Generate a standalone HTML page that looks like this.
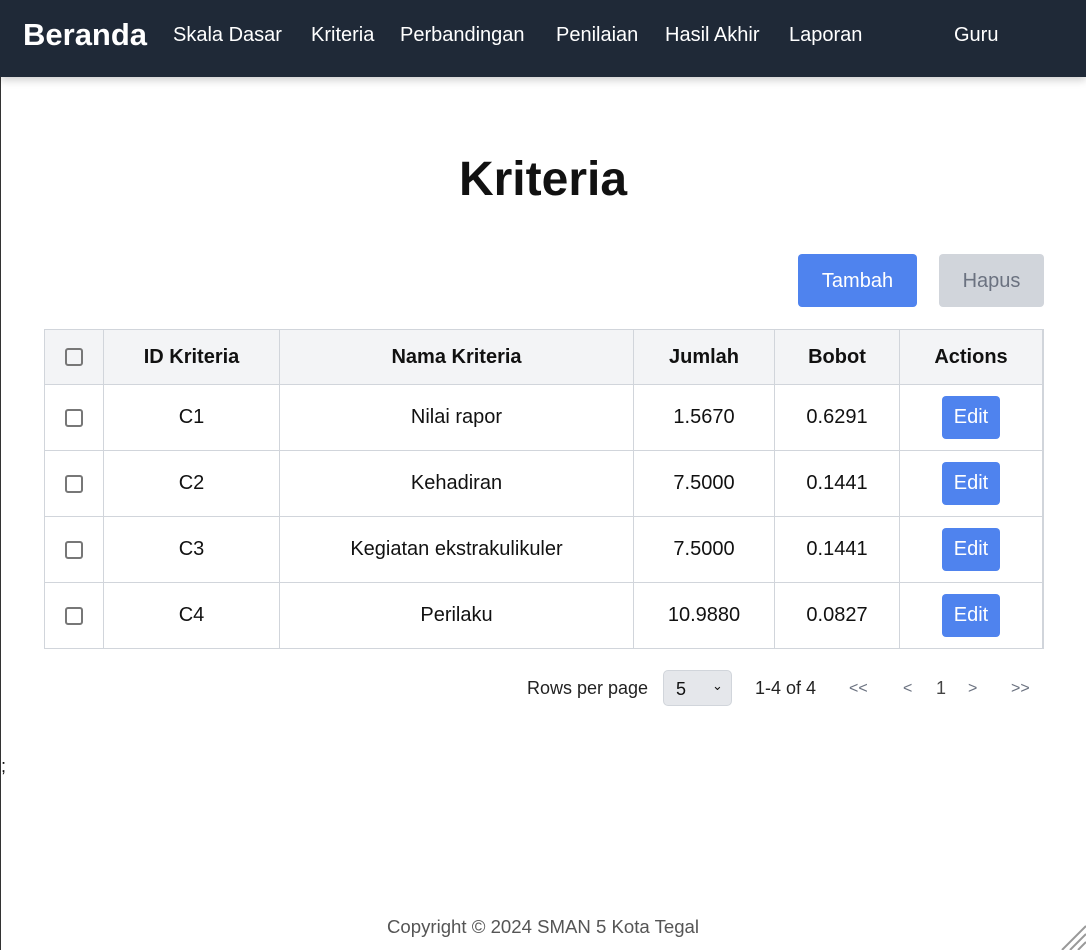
<!DOCTYPE html>
<html><head><style>
*{box-sizing:border-box;margin:0;padding:0}
body{width:1086px;height:950px;position:relative;overflow:hidden;background:#fff;font-family:"Liberation Sans",Arial,sans-serif;color:#111}
.lb{position:absolute;left:0;top:0;width:1px;height:950px;background:#333}
nav{position:absolute;left:0;top:0;width:1086px;height:77px;background:#1f2937;box-shadow:0 3px 8px rgba(0,0,0,.2)}
nav span{position:absolute;top:24px;color:#fff;font-size:20px}
nav .b{font-size:31px;font-weight:bold;top:17px;left:23px}
h1{position:absolute;top:152px;left:0;width:1086px;text-align:center;font-size:48px;font-weight:bold;color:#111}
.btn{position:absolute;top:254px;height:53px;border-radius:4px;font-size:20px;text-align:center;line-height:55px}
table{position:absolute;left:44px;top:329px;width:1000px;border-collapse:collapse;font-size:20px;border-right:2px solid #d1d5db}
td,th{border:1px solid #d1d5db;text-align:center}
th{background:#f3f4f6;height:55px;font-weight:bold}
td{height:66px}
.cb{display:inline-block;width:18px;height:18px;border:2px solid #777;border-radius:3px;vertical-align:middle}
.e{display:inline-block;background:#4f83ee;color:#fff;border-radius:4px;width:58px;height:43px;line-height:43px}
.pg{position:absolute;top:678px;font-size:18px;color:#222}
.g{color:#6b7280}
</style></head><body>
<div class="lb"></div>
<nav><span class="b">Beranda</span><span style="left:173px">Skala Dasar</span><span style="left:311px">Kriteria</span><span style="left:400px">Perbandingan</span><span style="left:556px">Penilaian</span><span style="left:665px">Hasil Akhir</span><span style="left:789px">Laporan</span><span style="left:954px">Guru</span></nav>
<h1>Kriteria</h1>
<div class="btn" style="left:798px;width:119px;background:#4f83ee;color:#fff">Tambah</div>
<div class="btn" style="left:939px;width:105px;background:#d1d5db;color:#6b7280">Hapus</div>
<table>
<colgroup><col style="width:59px"><col style="width:176px"><col style="width:354px"><col style="width:141px"><col style="width:125px"><col></colgroup>
<tr><th><span class="cb"></span></th><th>ID Kriteria</th><th>Nama Kriteria</th><th>Jumlah</th><th>Bobot</th><th>Actions</th></tr>
<tr><td><span class="cb"></span></td><td>C1</td><td>Nilai rapor</td><td>1.5670</td><td>0.6291</td><td><span class="e">Edit</span></td></tr>
<tr><td><span class="cb"></span></td><td>C2</td><td>Kehadiran</td><td>7.5000</td><td>0.1441</td><td><span class="e">Edit</span></td></tr>
<tr><td><span class="cb"></span></td><td>C3</td><td>Kegiatan ekstrakulikuler</td><td>7.5000</td><td>0.1441</td><td><span class="e">Edit</span></td></tr>
<tr><td><span class="cb"></span></td><td>C4</td><td>Perilaku</td><td>10.9880</td><td>0.0827</td><td><span class="e">Edit</span></td></tr>
</table>
<span class="pg" style="left:527px">Rows per page</span>
<div style="position:absolute;left:663px;top:670px;width:69px;height:36px;background:#e5e7eb;border:1px solid #d1d5db;border-radius:5px;font-size:18px;padding:8px 0 0 12px">5<span style="position:absolute;left:48px;top:7px;font-size:13px">&#8964;</span></div>
<span class="pg" style="left:755px">1-4 of 4</span>
<span class="pg g" style="left:849px;font-size:16px;top:680px">&lt;&lt;</span>
<span class="pg g" style="left:903px;font-size:16px;top:680px">&lt;</span>
<span class="pg" style="left:936px;color:#444">1</span>
<span class="pg g" style="left:968px;font-size:16px;top:680px">&gt;</span>
<span class="pg g" style="left:1011px;font-size:16px;top:680px">&gt;&gt;</span>
<span style="position:absolute;left:1px;top:756px;font-size:18px">;</span>
<div style="position:absolute;top:916px;width:1086px;text-align:center;font-size:18.6px;color:#555">Copyright © 2024 SMAN 5 Kota Tegal</div>
<svg style="position:absolute;right:0;bottom:0" width="26" height="26"><path d="M2 26L26 2M10 26L26 10M18 26L26 18" stroke="#999" stroke-width="2"/></svg>
</body></html>
